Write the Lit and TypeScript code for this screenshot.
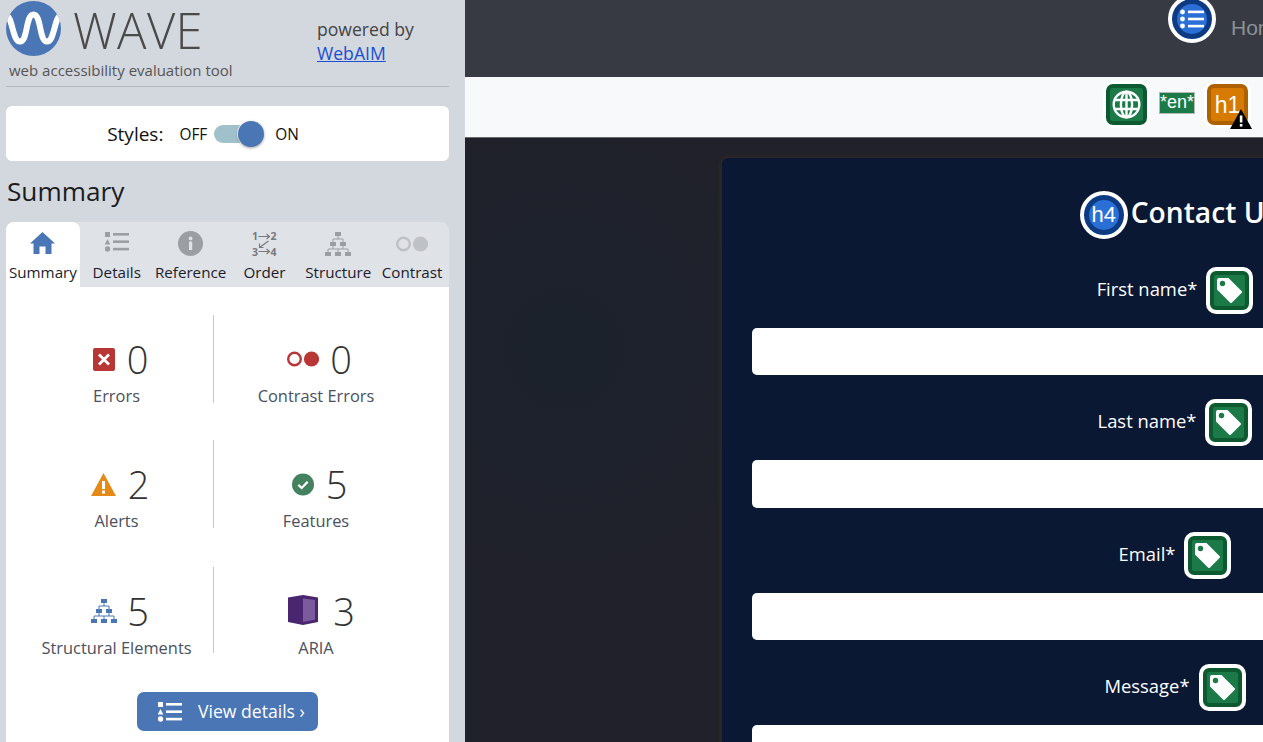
import { LitElement, html, css } from "lit";
import { customElement } from "lit/decorators.js";

const listIcon = (c: string, w: number, h: number) => html`<svg width=${w} height=${h} viewBox="0 0 24 20" fill=${c}>
  <rect x="0" y="0" width="5" height="5"/><polygon points="2.5,7 5.3,12.4 -.3,12.4"/><circle cx="2.5" cy="17" r="2.7"/>
  <rect x="8" y="1" width="16" height="2.6"/><rect x="8" y="8.4" width="16" height="2.6"/><rect x="8" y="15.8" width="16" height="2.6"/></svg>`;

const treeIcon = (c: string, w: number, h: number) => html`<svg width=${w} height=${h} viewBox="0 0 26 24" fill=${c}>
  <rect x="10" y="0" width="6" height="4"/><rect x="5" y="10" width="6" height="4"/><rect x="15" y="10" width="6" height="4"/>
  <rect x="0" y="20" width="6" height="4"/><rect x="10" y="20" width="6" height="4"/><rect x="20" y="20" width="6" height="4"/>
  <path d="M13 4V7M8 10V7H18V10M8 14V17M18 14V17M3 20V17H23V20M13 17V20" fill="none" stroke=${c} stroke-width="1"/></svg>`;

const contrastIcon = (c: string, w: number, h: number) => html`<svg width=${w} height=${h} viewBox="0 0 32 16">
  <circle cx="7.5" cy="8" r="6.3" fill="none" stroke=${c} stroke-width="2.4"/><circle cx="24.5" cy="8" r="7.6" fill=${c}/></svg>`;

const tabIcons = [
  html`<svg width="25" height="22" viewBox="0 0 25 22" fill="#4a76b5"><path d="M12.5 0L25 11.5H21.5V22H15.5V14.5H9.5V22H3.5V11.5H0Z"/></svg>`,
  listIcon("#9b9ea2", 24, 20),
  html`<svg width="25" height="25" viewBox="0 0 25 25"><circle cx="12.5" cy="12.5" r="12.5" fill="#9b9ea2"/><rect x="11" y="10.5" width="3.2" height="8.5" fill="#dfe2e7"/><circle cx="12.6" cy="7.4" r="1.9" fill="#dfe2e7"/></svg>`,
  html`<svg width="25" height="25" viewBox="0 0 25 25" fill="#77797d" font-family="'Open Sans',sans-serif" font-size="10.5" font-weight="700">
    <text x="0" y="9">1</text><text x="18.5" y="9">2</text><text x="0" y="24.5">3</text><text x="18.5" y="24.5">4</text>
    <path d="M6.5 5.5H17.5M14.5 3L17.5 5.5L14.5 8M6.5 20.5H17.5M14.5 18L17.5 20.5L14.5 23M16.5 10L7.5 16.5M7.5 12.5V16.5H11.5" fill="none" stroke="#77797d" stroke-width="1.1"/></svg>`,
  treeIcon("#9b9ea2", 26, 24),
  contrastIcon("#bfc1c5", 32, 16),
];

const tabs = ["Summary", "Details", "Reference", "Order", "Structure", "Contrast"];

const stats = [
  { n: 0, l: "Errors", s: 1, g: 12, i: html`<svg width="22" height="23" viewBox="0 0 22 23"><rect width="22" height="23" rx="2" fill="#b93636"/><path d="M6 6.5L16 16.5M16 6.5L6 16.5" stroke="#fff" stroke-width="2.8"/></svg>` },
  { n: 0, l: "Contrast Errors", s: 0, g: 11, i: contrastIcon("#b93636", 32, 16) },
  { n: 2, l: "Alerts", s: 0, g: 12, i: html`<svg width="25" height="23" viewBox="0 0 25 23"><polygon points="12.5,0 25,23 0,23" fill="#e68a17"/><rect x="11" y="8" width="3" height="8" fill="#fff"/><rect x="11" y="17.5" width="3" height="3" fill="#fff"/></svg>` },
  { n: 5, l: "Features", s: 0, g: 12, i: html`<svg width="22" height="23" viewBox="0 0 22 23"><circle cx="11" cy="11.5" r="11" fill="#44825f"/><path d="M6.3 11.8L9.7 15L15.7 8.8" fill="none" stroke="#fff" stroke-width="2.3"/></svg>` },
  { n: 5, l: "Structural Elements", s: 0, g: 10, i: treeIcon("#4a76b5", 26, 24) },
  { n: 3, l: "ARIA", s: 4, g: 15, i: html`<svg width="30" height="30" viewBox="0 0 30 30"><polygon points="0,2.5 15,0 30,2.5 30,27 15,30 0,27" fill="#4a2570"/><polygon points="15,3.5 27,5 27,24.8 15,27" fill="#7b5b9e"/></svg>` },
];

const fields = ["First name*", "Last name*", "Email*", "Message*"];

@customElement("app-root")
export class AppRoot extends LitElement {
  static styles = css`
    :host { display: flex; width: 100%; height: 742px; overflow: hidden; font-family: "Open Sans", sans-serif; }
    a { color: #1a4fd0; }

    .side { width: 465px; flex: none; box-sizing: border-box; padding: 0 16px 0 6px; background: #d3d7de; color: #444; }
    .head { display: flex; height: 86px; border-bottom: 1px solid #b4b7bc; }
    .brand { width: 311px; flex: none; }
    .logo { display: flex; align-items: center; gap: 12px; padding-top: 1px; height: 55px; }
    .wave { font-size: 49px; line-height: 55px; font-weight: 300; color: #4a4a4a; letter-spacing: .4px; padding-top: 3px; }
    .tag { font-size: 15px; line-height: 20px; margin: 4px 0 0 3px; color: #555; white-space: nowrap; }
    .power { font-size: 17.6px; line-height: 24px; padding-top: 17px; color: #444; }

    .styles { display: flex; align-items: center; justify-content: center; height: 55px; margin-top: 19px; padding-right: 49px; background: #fff; border-radius: 6px; color: #111; }
    .styles .lbl { font-size: 19px; margin-right: 16px; padding-top: 1px; }
    .sw { font-size: 15.4px; padding-top: 1px; }
    .track { position: relative; width: 37px; height: 18px; margin: 0 24px 0 7px; border-radius: 9px; background: #a0c0cb; }
    .knob { position: absolute; right: -13px; top: -4px; width: 26px; height: 26px; border-radius: 50%; background: #4a76b5; box-shadow: 0 1px 3px rgba(0,0,0,.4), 0 0 0 1px #fff; }

    h2 { margin: 13px 0 0 1px; font-size: 26.2px; line-height: 34px; font-weight: 400; color: #1c1c1c; }

    .tabs { display: grid; grid-template-columns: repeat(6, 1fr); height: 65px; margin-top: 14px; background: #dfe2e7; border-radius: 8px 8px 0 0; }
    .tab { display: flex; flex-direction: column; align-items: center; color: #1c1c2c; font-size: 15.2px; white-space: nowrap; border-radius: 8px 8px 0 0; }
    .tab.on { background: #fff; }
    .tico { height: 25px; margin-top: 9px; display: flex; align-items: center; justify-content: center; }
    .tab:nth-child(1) svg { margin-top: -2px; }
    .tab:nth-child(2) svg { margin-top: -4px; }
    .tab span { line-height: 20px; margin-top: 6px; }

    .panel { background: #fff; height: 455px; padding: 28px 31px 0 14px; box-sizing: border-box; }
    .grid { display: grid; grid-template-columns: 194px 204px; grid-auto-rows: 88px; row-gap: 37px; }
    .stat { display: flex; flex-direction: column; align-items: center; }
    .stat:nth-child(odd) { border-right: 1px solid #c8c8c8; }
    .stat:nth-child(n+5) { margin-top: 2px; }
    .stat:nth-child(6) svg { margin-top: -3px; }
    .top { display: flex; align-items: center; height: 46px; margin-top: 21px; padding-left: 7px; }
    .num { font-size: 38px; font-weight: 300; line-height: 46px; color: #333; }
    .top svg { display: block; }
    .lab { font-size: 16.4px; line-height: 22px; margin-top: 3px; color: #4a5060; white-space: nowrap; }
    .btn { display: flex; align-items: center; width: 181px; height: 39px; margin: 39px 0 0 117px; box-sizing: border-box; padding: 0 0 0 21px; gap: 16px; border-radius: 7px; background: #4a76b5; color: #fff; font-size: 17.6px; }
    .btn span { padding-bottom: 2px; }

    .page { flex: 1; min-width: 0; overflow: hidden; background: radial-gradient(circle at 100px 350px, #1b222c 0, rgba(32,33,42,0) 240px), radial-gradient(circle at 680px 0, #3a2530 0, rgba(32,33,42,0) 110px), #20212a; }
    .nav { display: flex; align-items: flex-start; height: 77px; padding-left: 703px; background: #373a42; white-space: nowrap; }
    .ring { position: relative; flex: none; display: flex; align-items: center; justify-content: center; width: 48px; height: 48px; box-sizing: border-box; border: 4px solid #fff; border-radius: 50%; background: #2a6fd6; box-shadow: inset 0 0 0 5px #0d3a80; }
    .nav .ring { margin-top: -5px; }
    .ring b { font-weight: 400; font-size: 22px; color: #fff; font-family: "Liberation Sans", sans-serif; }
    .home { margin: 14px 0 0 15px; font-size: 21px; line-height: 28px; color: #8d9198; font-family: "Liberation Sans", sans-serif; }

    .bar { display: flex; justify-content: flex-end; align-items: center; height: 61px; box-sizing: border-box; padding: 0 12px 6px 0; gap: 9px; background: #f8f9fa; border-bottom: 1px solid #6a6a6a; }
    .badge { position: relative; flex: none; display: flex; align-items: center; justify-content: center; width: 47px; height: 47px; box-sizing: border-box; border: 4px solid #fff; border-radius: 10px; background: #1b7a48; box-shadow: inset 0 0 0 4px #0d5a30; }
    .bar .badge { border-width: 3px; }
    .badge.or { padding-top: 2px; background: #d67a00; box-shadow: inset 0 0 0 4px #ad6100; font-family: "Liberation Sans", sans-serif; font-size: 23px; color: #fff; }
    .warn { position: absolute; right: -4px; bottom: -4px; }
    .en { width: 36px; height: 22px; box-sizing: border-box; border: 1px solid #b5bab7; background: #1b7a48; color: #fff; font: 18px/19px "Liberation Sans", sans-serif; text-align: center; margin-top: -3px; overflow: hidden; }

    .card { width: 906px; box-sizing: border-box; margin: 20px 0 0 257px; padding: 33px 30px 0; border-radius: 6px; background: #0a1833; box-shadow: 0 0 6px rgba(120,70,40,.35); color: #fff; }
    .title { display: flex; align-items: center; justify-content: center; gap: 3px; height: 48px; margin-bottom: 28px; padding-left: 8px; font-size: 28.2px; font-weight: 600; }
    .title span { margin-bottom: 6px; }
    .row { display: flex; align-items: center; justify-content: center; gap: 9px; height: 47px; font-size: 18.4px; }
    .row span { margin-bottom: 4px; }
    .input { height: 47.33px; margin: 14px 0 24px; background: #fff; border-radius: 5px; }
  `;

  render() {
    return html`
      <div class="side">
        <div class="head">
          <div class="brand">
            <div class="logo">
              <svg width="55" height="55" viewBox="0 0 55 55">
                <defs><clipPath id="lc"><circle cx="27.5" cy="27.5" r="27.5"/></clipPath></defs>
                <circle cx="27.5" cy="27.5" r="27.5" fill="#4a76b5"/>
                <path clip-path="url(#lc)" d="M-1 14C7 14 6 40.5 14 40.5C22 40.5 19.5 13.5 27.5 13.5C35.5 13.5 33 40.5 41 40.5C49 40.5 48 14 56 14" fill="none" stroke="#fff" stroke-width="6"/>
              </svg>
              <span class="wave">WAVE</span>
            </div>
            <div class="tag">web accessibility evaluation tool</div>
          </div>
          <div class="power">powered by<br /><a href="#">WebAIM</a></div>
        </div>

        <div class="styles">
          <span class="lbl">Styles:</span>
          <span class="sw">OFF</span>
          <div class="track"><div class="knob"></div></div>
          <span class="sw">ON</span>
        </div>

        <h2>Summary</h2>

        <div class="tabs">
          ${tabs.map((t, i) => html`<div class="tab ${i === 0 ? "on" : ""}"><div class="tico">${tabIcons[i]}</div><span>${t}</span></div>`)}
        </div>

        <div class="panel">
          <div class="grid">
            ${stats.map((s) => html`<div class="stat"><div class="top" style="margin-left:${s.s}px">${s.i}<span class="num" style="margin-left:${s.g}px">${s.n}</span></div><div class="lab">${s.l}</div></div>`)}
          </div>
          <div class="btn">${listIcon("#fff", 24, 20)}<span>View details ›</span></div>
        </div>
      </div>

      <div class="page">
        <div class="nav">
          <div class="ring">
            <svg width="24" height="20" viewBox="0 0 24 20" fill="#fff"><circle cx="2.5" cy="3" r="2.4"/><circle cx="2.5" cy="10" r="2.4"/><circle cx="2.5" cy="17" r="2.4"/><rect x="8" y="1.6" width="16" height="2.6"/><rect x="8" y="8.7" width="16" height="2.6"/><rect x="8" y="15.8" width="16" height="2.6"/></svg>
          </div>
          <span class="home">Home</span>
        </div>

        <div class="bar">
          <div class="badge">
            <svg width="29" height="29" viewBox="0 0 29 29" fill="none" stroke="#fff" stroke-width="2.4"><circle cx="14.5" cy="14.5" r="12.8"/><ellipse cx="14.5" cy="14.5" rx="5.6" ry="12.8"/><path d="M14.5 2V27M3 10H26M3 19H26"/></svg>
          </div>
          <div class="en">*en*</div>
          <div class="badge or">h1
            <svg class="warn" width="22" height="20" viewBox="0 0 22 20"><polygon points="11,0 22,20 0,20" fill="#000"/><rect x="9.8" y="6.5" width="2.6" height="7" fill="#fff"/><rect x="9.8" y="15" width="2.6" height="2.6" fill="#fff"/></svg>
          </div>
        </div>

        <div class="card">
          <div class="title"><div class="ring"><b>h4</b></div><span>Contact Us</span></div>
          ${fields.map((f) => html`
            <div class="row"><span>${f}</span>
              <div class="badge"><svg width="25" height="25" viewBox="0 0 25 25"><path fill-rule="evenodd" fill="#fff" d="M2 0H11.5L24.5 13Q25.5 14 24.5 15L15 24.5Q14 25.5 13 24.5L0 11.5V2Q0 0 2 0ZM5.5 2.8A2.7 2.7 0 1 0 5.5 8.2A2.7 2.7 0 1 0 5.5 2.8Z"/></svg></div>
            </div>
            <div class="input"></div>`)}
        </div>
      </div>
    `;
  }
}
